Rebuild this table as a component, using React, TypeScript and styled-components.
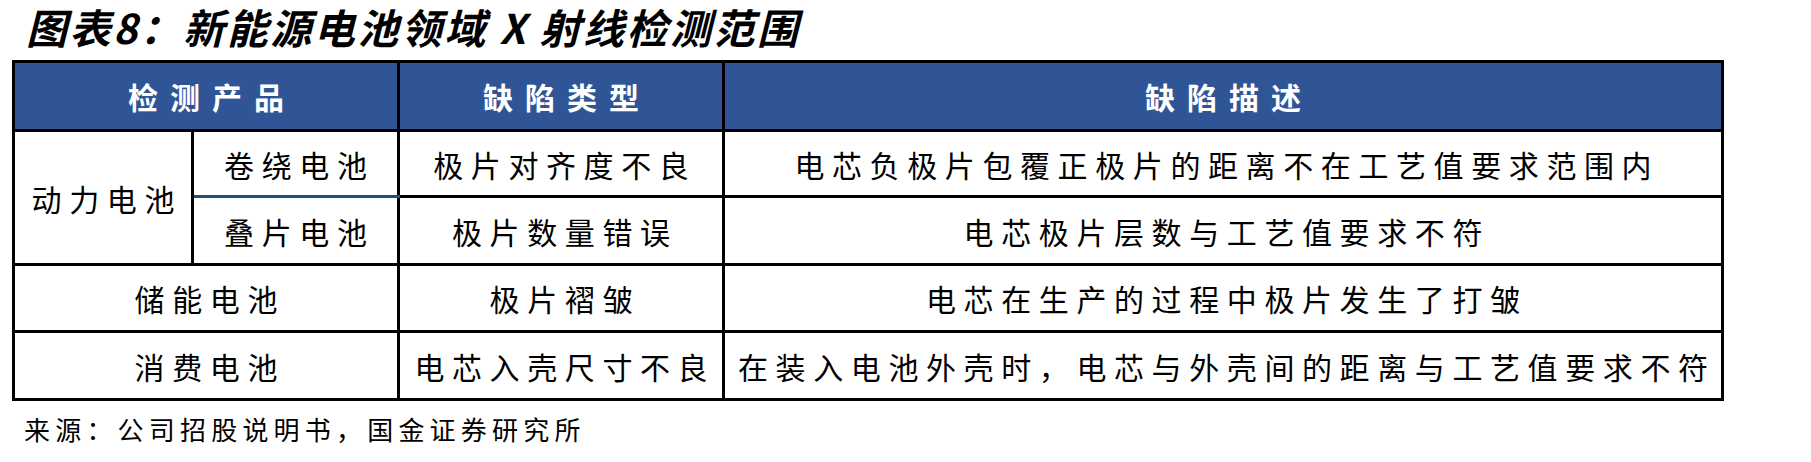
import React from 'react';
import styled, { createGlobalStyle } from 'styled-components';

const GlobalStyle = createGlobalStyle`
  html, body { margin: 0; padding: 0; background: #ffffff; }
  body {
    font-family: "Noto Sans CJK SC", "Noto Sans", "Liberation Sans", sans-serif;
    color: #000000;
  }
`;

const Page = styled.div`
  width: 1811px;
  height: 462px;
  box-sizing: border-box;
  padding-left: 12px;
  display: flex;
  flex-direction: column;
  overflow: hidden;
`;

const Title = styled.h1`
  margin: 0 0 8px 0;
  padding: 0 12px 0 14px;
  align-self: flex-start;
  font-size: 41px;
  line-height: 52px;
  font-weight: 700;
  font-style: italic;
  letter-spacing: 2.5px;
  white-space: nowrap;
`;

const Table = styled.table`
  border-collapse: collapse;
  table-layout: fixed;
  width: 1709px;
`;

const Row = styled.tr<{ $h: number }>`
  height: ${(p) => p.$h}px;
`;

const HeadCell = styled.th`
  border: 3px solid #000000;
  background: #2f5597;
  color: #ffffff;
  font-size: 30px;
  font-weight: 700;
  letter-spacing: 12px;
  padding: 0 0 0 12px;
  text-align: center;
  vertical-align: middle;
  line-height: 1;
  white-space: nowrap;
`;

const Cell = styled.td<{ $split?: 'top' | 'bottom' }>`
  border: 3px solid #000000;
  ${(p) => (p.$split === 'top' ? 'border-bottom-color: #1f4e79;' : '')}
  ${(p) => (p.$split === 'bottom' ? 'border-top-color: #1f4e79;' : '')}
  font-size: 30px;
  font-weight: 400;
  letter-spacing: 7.6px;
  padding: 0 0 0 7.6px;
  text-align: center;
  vertical-align: middle;
  line-height: 1;
  white-space: nowrap;
`;

const Source = styled.p`
  margin: 10px 0 0 0;
  padding-left: 12px;
  font-size: 26px;
  line-height: 36px;
  letter-spacing: 5.2px;
  white-space: nowrap;
`;

type DataRow = { type: string; desc: string };

const power: DataRow[] = [
  { type: '极片对齐度不良', desc: '电芯负极片包覆正极片的距离不在工艺值要求范围内' },
  { type: '极片数量错误', desc: '电芯极片层数与工艺值要求不符' },
];

const others: (DataRow & { product: string; h: number })[] = [
  { product: '储能电池', type: '极片褶皱', desc: '电芯在生产的过程中极片发生了打皱', h: 67 },
  { product: '消费电池', type: '电芯入壳尺寸不良', desc: '在装入电池外壳时，电芯与外壳间的距离与工艺值要求不符', h: 68 },
];

export default function App() {
  return (
    <>
      <GlobalStyle />
      <Page>
        <Title>图表8：新能源电池领域 X 射线检测范围</Title>
        <Table>
          <colgroup>
            <col style={{ width: 179 }} />
            <col style={{ width: 206 }} />
            <col style={{ width: 325 }} />
            <col style={{ width: 999 }} />
          </colgroup>
          <thead>
            <Row $h={69}>
              <HeadCell colSpan={2}>检测产品</HeadCell>
              <HeadCell>缺陷类型</HeadCell>
              <HeadCell>缺陷描述</HeadCell>
            </Row>
          </thead>
          <tbody>
            <Row $h={66}>
              <Cell rowSpan={2}>动力电池</Cell>
              <Cell $split="top">卷绕电池</Cell>
              <Cell>{power[0].type}</Cell>
              <Cell>{power[0].desc}</Cell>
            </Row>
            <Row $h={68}>
              <Cell $split="bottom">叠片电池</Cell>
              <Cell>{power[1].type}</Cell>
              <Cell>{power[1].desc}</Cell>
            </Row>
            {others.map((r) => (
              <Row key={r.product} $h={r.h}>
                <Cell colSpan={2}>{r.product}</Cell>
                <Cell>{r.type}</Cell>
                <Cell>{r.desc}</Cell>
              </Row>
            ))}
          </tbody>
        </Table>
        <Source>来源：公司招股说明书，国金证券研究所</Source>
      </Page>
    </>
  );
}
